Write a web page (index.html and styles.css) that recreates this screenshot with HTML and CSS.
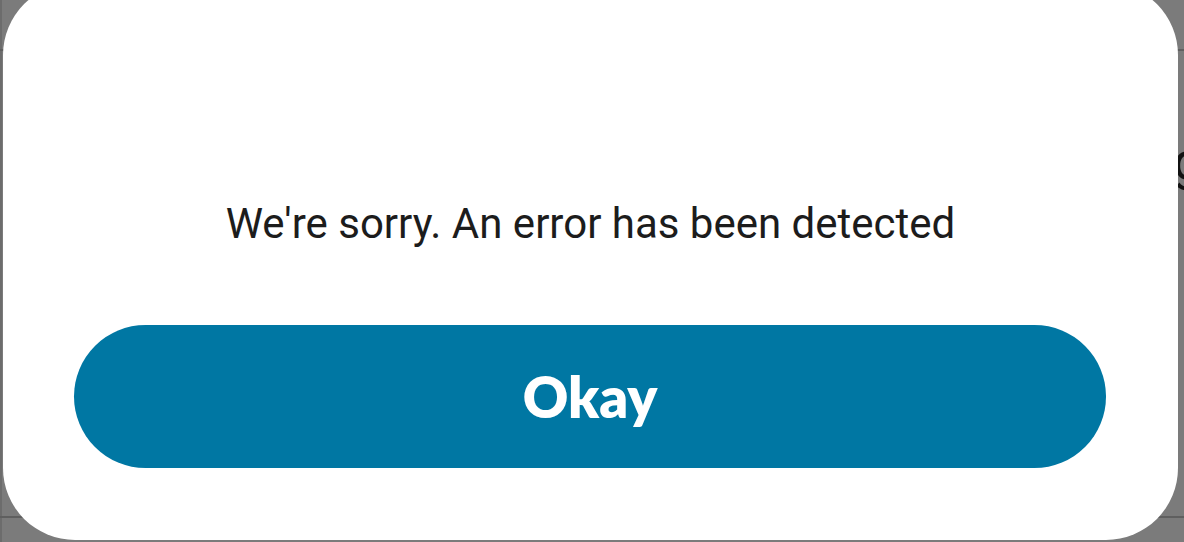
FILE: index.html
```html
<!DOCTYPE html>
<html>
<head>
<meta charset="utf-8">
<link rel="stylesheet" href="styles.css">
</head>
<body>
<div class="backdrop">
  <span class="behind">g</span>
  <div class="dialog">
    <p class="message">We're sorry. An error has been detected</p>
    <button class="okay">Okay</button>
  </div>
</div>
</body>
</html>
```
FILE: styles.css
```css
html, body {
  margin: 0;
  padding: 0;
  width: 1184px;
  height: 542px;
  overflow: hidden;
}
body {
  background:
    linear-gradient(#5f5f5f, #5f5f5f) 0 516px / 100% 2px no-repeat,
    linear-gradient(#5f5f5f, #5f5f5f) 0 49px / 100% 2px no-repeat,
    linear-gradient(#6c6c6c, #6c6c6c) 0 0 / 2px 100% no-repeat,
    #7b7b7b;
}
.backdrop {
  position: relative;
  display: flex;
  padding-left: 3px;
}
.behind {
  position: absolute;
  left: 1173px;
  top: 132px;
  font-family: Roboto, "Liberation Sans", sans-serif;
  font-size: 52px;
  line-height: 60px;
  color: #111111;
}
.dialog {
  position: relative;
  margin-top: -17px;
  width: 1175px;
  height: 557px;
  background: #ffffff;
  border-radius: 72px;
  display: flex;
  flex-direction: column;
  align-items: center;
  box-sizing: border-box;
  padding-top: 216px;
}
.message {
  margin: 0;
  font-family: Roboto, "Liberation Sans", sans-serif;
  font-size: 42px;
  line-height: 50px;
  color: #1c1c1c;
  white-space: nowrap;
}
.okay {
  margin-top: 76px;
  margin-left: -1px;
  width: 1032px;
  height: 143px;
  border: none;
  border-radius: 72px;
  background: #0077a3;
  color: #ffffff;
  font-family: Lato, "Open Sans", sans-serif;
  font-weight: 800;
  font-size: 56px;
  padding: 0;
  cursor: pointer;
}
```
